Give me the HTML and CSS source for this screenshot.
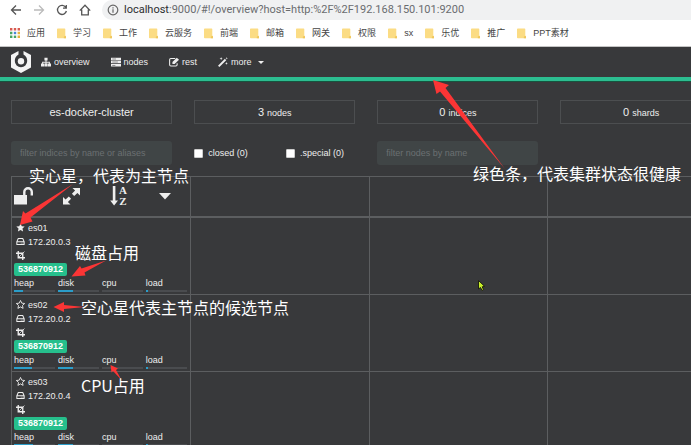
FILE: index.html
```html
<!DOCTYPE html>
<html lang="zh-CN">
<head>
<meta charset="utf-8">
<title>cerebro</title>
<link rel="stylesheet" href="styles.css">
</head>
<body>
<svg class="defs" width="0" height="0" aria-hidden="true">
  <symbol id="folder" viewBox="0 0 9 11"><path fill="#fbdc84" d="M0 1.2Q0 .4.8.4h6.800Q8.300.4 8.300 1.200v6.600l.7.8v1.700H.8Q0 10.300 0 9.500z"/><path fill="#f0c75c" d="M6.800 10.300v-1.500l1.500-1 .7.8v1.700z"/></symbol>
  <symbol id="star" viewBox="0 0 16 16"><path d="M8 .8l2.200 4.800 5.200.6-3.900 3.500 1.100 5.200L8 12.300l-4.600 2.600 1.100-5.200L.6 6.200l5.200-.6z"/></symbol>
  <symbol id="disk" viewBox="0 0 16 16"><path fill="none" stroke="currentColor" stroke-width="1.800" stroke-linejoin="round" d="M1.500 8.500 4 2.800h8l2.500 5.700v4.700h-13zM1.500 8.500h13"/><path d="M8.500 10h1.500v1.600H8.500zM11.500 10H13v1.600h-1.500z"/></symbol>
  <symbol id="crop" viewBox="0 0 16 16"><path fill="none" stroke="currentColor" stroke-width="2.400" d="M4 0v12h12M0 4h12v12"/><path fill="none" stroke="currentColor" stroke-width="1.400" d="M4.500 11.500 15 1"/></symbol>
</svg>

<header class="browser">
  <div class="toolbar">
    <button class="tool" aria-label="后退"><svg viewBox="0 0 12 12"><path d="M11 6H2M6 1.500 1.500 6 6 10.500"/></svg></button>
    <button class="tool tool-off" aria-label="前进"><svg viewBox="0 0 12 12"><path d="M1 6h9M6 1.500 10.500 6 6 10.500"/></svg></button>
    <button class="tool" aria-label="刷新"><svg viewBox="0 0 12 12"><path d="M9.800 3.500A4.500 4.500 0 1 0 10.400 7M10.300 1v3.200H7"/></svg></button>
    <button class="tool" aria-label="主页"><svg viewBox="0 0 12 12"><path d="M.8 6.600 6 1.300l5.200 5.300M2.700 5.500v5.300h6.600V5.500"/></svg></button>
    <div class="omnibox">
      <svg class="info" viewBox="0 0 12 12"><circle cx="6" cy="6" r="4.800"/><path d="M6 5.300v3.500M6 3.200v1.200"/></svg>
      <span class="url"><b>localhost</b>:9000/#!/overview?host=http:%2F%2F192.168.150.101:9200</span>
    </div>
  </div>
  <nav class="bookmarks">
    <a href="#"><svg class="apps" viewBox="0 0 10 10"><path fill="#d85a50" d="M0 0h2.400v2.400H0zM3.800 0h2.400v2.400H3.800zM7.600 0H10v2.400H7.600z"/><path fill="#4aa564" d="M0 3.800h2.400v2.400H0zM0 7.600h2.400V10H0z"/><path fill="#4a86d8" d="M3.800 3.800h2.400v2.400H3.800z"/><path fill="#e5b33d" d="M7.600 3.800H10v2.400H7.600zM7.600 7.600H10V10H7.600z"/><path fill="#4aa564" d="M3.800 7.600h2.400V10H3.800z"/></svg>应用</a>
    <a href="#"><svg class="folder"><use href="#folder"/></svg>学习</a>
    <a href="#"><svg class="folder"><use href="#folder"/></svg>工作</a>
    <a href="#"><svg class="folder"><use href="#folder"/></svg>云服务</a>
    <a href="#"><svg class="folder"><use href="#folder"/></svg>前端</a>
    <a href="#"><svg class="folder"><use href="#folder"/></svg>邮箱</a>
    <a href="#"><svg class="folder"><use href="#folder"/></svg>网关</a>
    <a href="#"><svg class="folder"><use href="#folder"/></svg>权限</a>
    <a href="#"><svg class="folder"><use href="#folder"/></svg>sx</a>
    <a href="#"><svg class="folder"><use href="#folder"/></svg>乐优</a>
    <a href="#"><svg class="folder"><use href="#folder"/></svg>推广</a>
    <a href="#"><svg class="folder"><use href="#folder"/></svg>PPT素材</a>
  </nav>
</header>

<nav class="navbar">
  <a class="brand" href="#" aria-label="cerebro"><svg viewBox="0 0 20 22"><path fill="#f4f4f4" d="M7.500 0v3.600A7.200 7.200 0 0 0 3.800 10a6.200 6.200 0 0 0 12.400 0 7.200 7.200 0 0 0-3.700-6.400V0L20 4v12.500L10 22 0 16.500V4z"/><circle cx="10" cy="10.300" r="3.200" fill="#f4f4f4"/></svg></a>
  <a href="#"><svg viewBox="0 0 16 16"><path d="M5.500 1h5v4.500H8.800v2h5.400v3H16V15h-5v-4.500h1.700V9H8.800v1.500h1.700V15h-5v-4.500h1.700V9H3.300v1.500H5V15H0v-4.500h1.800v-3h5.400v-2H5.500z"/></svg>overview</a>
  <a href="#"><svg viewBox="0 0 16 16"><path d="M0 1h16v4H0zM0 6h16v4H0zM0 11h16v4H0z"/><path fill="#38393b" d="M2 2.600h6v.8H2zM2 7.600h9v.8H2zM2 12.600h5v.8H2z"/></svg>nodes</a>
  <a href="#"><svg viewBox="0 0 16 16"><path fill="none" stroke="currentColor" stroke-width="1.700" d="M10 2.500H3q-2 0-2 2v8q0 2 2 2h8q2 0 2-2V10"/><path d="m5.500 8 7-7L16 4.300l-7 7H5.500z"/></svg>rest</a>
  <a href="#"><svg viewBox="0 0 16 16"><path d="M0 13.800 11 2.800 13.200 5l-11 11zM5 0l.7 1.800 1.800.7-1.800.7L5 5l-.7-1.800-1.800-.7 1.800-.7zM14 0l.5 1.500L16 2l-1.500.5L14 4l-.5-1.500L12 2l1.500-.5zM13.500 8l.6 1.700 1.700.6-1.700.6-.6 1.700-.6-1.700-1.700-.6 1.700-.6z"/></svg><span>more</span><i class="caret"></i></a>
</nav>

<main class="content">
  <section class="stats">
    <div class="stat">es-docker-cluster</div>
    <div class="stat">3 <small>nodes</small></div>
    <div class="stat">0 <small>indices</small></div>
    <div class="stat">0 <small>shards</small></div>
  </section>

  <form class="filters">
    <input class="field" type="text" aria-label="filter indices" placeholder="filter indices by name or aliases">
    <div class="checks">
      <label><input type="checkbox">closed (0)</label>
      <label><input type="checkbox">.special (0)</label>
    </div>
    <input class="field" type="text" aria-label="filter nodes" placeholder="filter nodes by name">
  </form>

  <table class="grid">
    <thead>
      <tr>
        <th>
          <div class="actions">
            <button aria-label="lock"><svg viewBox="0 0 20 20"><path d="M0 9h13v9.500H0z"/><path fill="none" stroke="currentColor" stroke-width="2.400" d="M10.300 9V6a3.700 3.700 0 0 1 7.500 0v3.500"/></svg></button>
            <button aria-label="expand"><svg viewBox="0 0 20 20"><path d="M10.500 2H18v7.500l-2.600-2.600-3.200 3.200-2.300-2.300 3.200-3.200zM8.500 18.500H1V11l2.600 2.600 3.200-3.200 2.300 2.300-3.200 3.200z"/></svg></button>
            <button class="sort" aria-label="sort"><svg viewBox="0 0 8 20"><path d="M2.800 0h2.600v14.500H8L4.100 19.500.2 14.500h2.600z"/></svg><span>A<br>Z</span></button>
            <button aria-label="menu"><svg viewBox="0 0 20 20"><path d="M4 7h12l-6 6.500z"/></svg></button>
          </div>
        </th>
        <th></th><th></th><th></th>
      </tr>
    </thead>
    <tbody>
      <tr>
        <td>
          <div class="line"><svg><use href="#star"/></svg>es01</div>
          <div class="line"><svg><use href="#disk"/></svg>172.20.0.3</div>
          <div class="line"><svg><use href="#crop"/></svg></div>
          <span class="badge">536870912</span>
          <div class="meters">
            <div>heap<span class="bar"><i style="width:22%"></i></span></div>
            <div>disk<span class="bar"><i style="width:37%"></i></span></div>
            <div>cpu<span class="bar"></span></div>
            <div>load<span class="bar"><i style="width:5%"></i></span></div>
          </div>
        </td>
        <td></td><td></td><td></td>
      </tr>
      <tr>
        <td>
          <div class="line"><svg class="hollow"><use href="#star"/></svg>es02</div>
          <div class="line"><svg><use href="#disk"/></svg>172.20.0.2</div>
          <div class="line"><svg><use href="#crop"/></svg></div>
          <span class="badge">536870912</span>
          <div class="meters">
            <div>heap<span class="bar"><i style="width:45%"></i></span></div>
            <div>disk<span class="bar"><i style="width:37%"></i></span></div>
            <div>cpu<span class="bar"></span></div>
            <div>load<span class="bar"><i style="width:5%"></i></span></div>
          </div>
        </td>
        <td></td><td></td><td></td>
      </tr>
      <tr>
        <td>
          <div class="line"><svg class="hollow"><use href="#star"/></svg>es03</div>
          <div class="line"><svg><use href="#disk"/></svg>172.20.0.4</div>
          <div class="line"><svg><use href="#crop"/></svg></div>
          <span class="badge">536870912</span>
          <div class="meters">
            <div>heap<span class="bar"><i style="width:46%"></i></span></div>
            <div>disk<span class="bar"><i style="width:37%"></i></span></div>
            <div>cpu<span class="bar"></span></div>
            <div>load<span class="bar"><i style="width:5%"></i></span></div>
          </div>
        </td>
        <td></td><td></td><td></td>
      </tr>
    </tbody>
  </table>
</main>

<div class="notes">
  <svg width="691" height="445" viewBox="0 0 691 445" aria-hidden="true">
    <g fill="#fb3535">
      <path d="M20 225 23 211l2.500 2.500L73 184 30.500 217.500l2 4z"/>
      <path d="M433 80l16 5-3.500 3L505 169 440 91.500l-3.500 2.500z"/>
      <path d="M71.500 276.500 80 266l1.500 2.500L106 260.500 84.500 272.500l1 3z"/>
      <path d="M53.500 307 64 302v3l20.500 2L64 309v3z"/>
      <path d="M110.500 365 118 368.500l-2 1.500 5.500 10-8.500-9-1.500 1.500z"/>
    </g>
    <path fill="#c8f02a" stroke="#20230f" d="M478.500 280.500v8.500l2-1.500 1.500 3 1.500-1-1.300-2.700 2.500-.4z"/>
  </svg>
  <p class="note master">实心星，代表为主节点</p>
  <p class="note health">绿色条，代表集群状态很健康</p>
  <p class="note storage">磁盘占用</p>
  <p class="note candidate">空心星代表主节点的候选节点</p>
  <p class="note processor">CPU占用</p>
</div>
</body>
</html>
```
FILE: styles.css
```css
* { box-sizing: border-box; }
html { overflow: hidden; }
body {
  margin: 0;
  min-height: 100vh;
  overflow: hidden;
  position: relative;
  background: #38393b;
  color: #eee;
  font: 9px/14px "Liberation Sans", "Noto Sans CJK SC", sans-serif;
}
a { color: inherit; text-decoration: none; }
button { padding: 0; border: 0; background: none; color: inherit; font: inherit; }
svg { display: block; flex: none; fill: currentColor; }
.defs { position: absolute; }

.browser { background: #fff; color: #444; border-bottom: 1px solid #c4c4c4; }
.toolbar { display: flex; align-items: center; height: 20px; padding-left: 10px; gap: 11px; }
.tool svg { width: 12px; height: 12px; fill: none; stroke: #555; stroke-width: 1.3; }
.tool-off svg { stroke: #bbb; }
.omnibox {
  flex: 1;
  display: flex;
  align-items: center;
  gap: 5px;
  height: 20px;
  padding-left: 5px;
  background: #f0f1f2;
  border-radius: 10px 0 0 10px;
}
.info { width: 12px; height: 12px; fill: none; stroke: #666; stroke-width: 1.2; }
.url { font: 11px/20px Roboto, sans-serif; color: #6a6c6f; white-space: nowrap; }
.url b { font-weight: 400; color: #2c2d2f; }
.bookmarks { display: flex; align-items: center; gap: 12px; height: 26px; padding-left: 10px; white-space: nowrap; }
.bookmarks a { display: flex; align-items: center; gap: 7px; }
.apps { width: 10px; height: 10px; }
.folder { width: 9px; height: 11px; }

.navbar {
  display: flex;
  align-items: center;
  gap: 21px;
  height: 34px;
  padding-left: 11px;
  border-bottom: 4px solid #2cbd90;
  box-shadow: 0 1px #17543f;
}
.navbar a { display: flex; align-items: center; gap: 3px; }
.navbar a svg { width: 10px; height: 10px; }
.navbar .brand { margin-right: -11px; }
.navbar .brand svg { width: 20px; height: 22px; }
.navbar span { padding-right: 3px; }
.caret { border: 3px solid transparent; border-top-color: #eee; border-bottom: 0; }

.content { padding: 19px 0 0 11px; }
.stats, .filters { display: grid; grid-template-columns: repeat(4, 23.7%); column-gap: 22px; }
.stat { height: 24px; border: 1px solid #4c4e50; text-align: center; font-size: 11px; line-height: 22px; }
.stat small { font-size: 9px; }
.filters { margin: 17px 0 11px; align-items: center; }
.field {
  width: 100%;
  height: 24px;
  padding: 0 9px;
  border: 0;
  border-radius: 3px;
  background: #404546;
  color: #eee;
  font: inherit;
}
.field::placeholder { color: #6b7072; opacity: 1; }
.checks { display: grid; grid-template-columns: 57% 43%; white-space: nowrap; }
.checks label { display: flex; align-items: center; gap: 5px; }
.checks input { appearance: none; width: 9px; height: 9px; margin: 0; background: #fff; border: 1px solid #ccc; border-radius: 1px; }

.grid { width: 105.3%; table-layout: fixed; border-collapse: collapse; }
.grid th, .grid td { padding: 3px 3px 2px 2px; border: 1px solid #5c5e60; vertical-align: top; }
.grid th { padding: 0 2px; height: 40px; vertical-align: middle; border-bottom-width: 2px; }
.actions { display: flex; gap: 28px; align-items: center; }
.actions svg { width: 20px; height: 20px; }
.sort { display: flex; align-items: center; gap: 1px; }
.sort .arrow, .sort svg { width: 8px; }
.sort span { font: bold 11px/11px "Liberation Serif", serif; }
.line { display: flex; align-items: center; gap: 3px; height: 14px; padding-left: 2px; }
.line svg { width: 9px; height: 9px; }
.line .hollow { fill: none; stroke: currentColor; stroke-width: 1.6; }
.badge {
  display: block;
  width: fit-content;
  padding: 0 4px;
  border-radius: 2px;
  background: #26bf8c;
  color: #fff;
  font-weight: 700;
  line-height: 13px;
}
.meters { display: grid; grid-template-columns: repeat(4, 1fr); gap: 3px; padding-top: 2px; line-height: 11px; }
.bar { display: block; height: 2px; margin-top: 1px; background: #4a4c4f; }
.bar i { display: block; height: 2px; background: #2b9dc9; }

.notes { position: absolute; top: 0; left: 0; pointer-events: none; }
.note { position: absolute; margin: 0; color: #fff; font: 16px/20px "Noto Sans CJK SC", sans-serif; white-space: nowrap; }
.master { left: 29px; top: 165px; }
.health { left: 473px; top: 163px; }
.storage { left: 75px; top: 242px; }
.candidate { left: 81px; top: 297px; }
.processor { left: 81px; top: 375px; }
```
